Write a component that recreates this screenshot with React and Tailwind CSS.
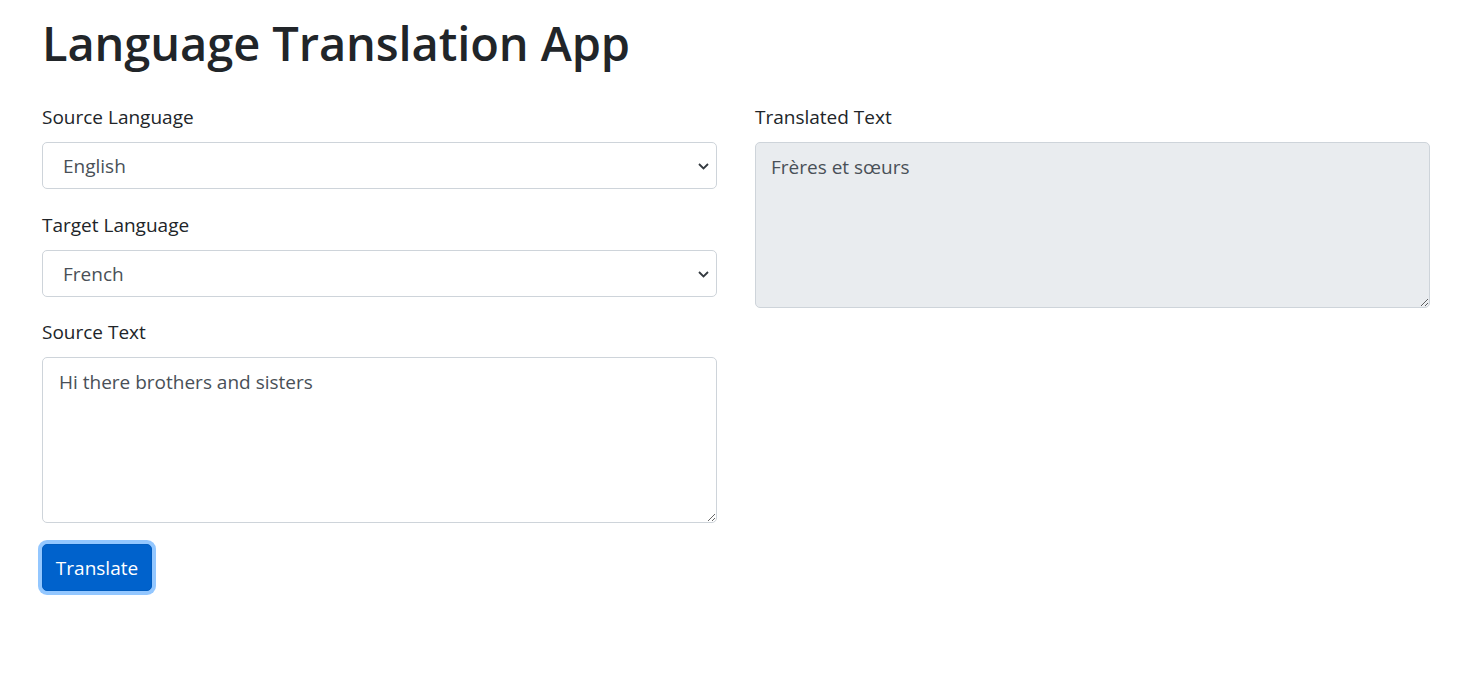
import React, { useState } from 'react';

const Chevron = () => (
  <svg width="11" height="7" viewBox="0 0 11 7" fill="none" className="shrink-0">
    <path d="M1 1l4.5 4.5L10 1" stroke="#343a40" strokeWidth="1.8" />
  </svg>
);

const FakeSelect = ({ value }) => (
  <div className="flex h-[47px] w-full items-center justify-between rounded-[5px] border border-[#ced4da] bg-white pl-[20px] pr-[7px] pt-[2px] text-[19px] text-[#495057]">
    <span>{value}</span>
    <Chevron />
  </div>
);

const App = () => {
  const [source, setSource] = useState('Hi there brothers and sisters');

  return (
    <div className="min-h-screen bg-white px-[42px] text-[#212529]" style={{ fontFamily: '"Open Sans", "Noto Sans", sans-serif' }}>
      {/** Heading **/}
      <h1 className="mt-[13px] mb-[29px] text-[47px] font-semibold leading-[60px] tracking-[-0.1px]">Language Translation App</h1>

      <div className="grid w-[1388px] grid-cols-2 gap-x-[38px]">
        {/** Left column **/}
        <div>
          <div className="mb-[21px]">
            <label className="mb-[10px] block text-[19px] leading-[30px]">Source Language</label>
            <FakeSelect value="English" />
          </div>
          <div className="mb-[20px]">
            <label className="mb-[10px] block text-[19px] leading-[30px]">Target Language</label>
            <FakeSelect value="French" />
          </div>
          <div className="mb-[21px]">
            <label className="mb-[10px] block text-[19px] leading-[30px]">Source Text</label>
            <textarea
              value={source}
              onChange={(e) => setSource(e.target.value)}
              className="block h-[166px] w-full rounded-[5px] border border-[#ced4da] bg-white px-[16px] pt-[9px] pb-[5px] text-[19px] leading-[30px] text-[#495057] outline-none"
            />
          </div>
          <button className="h-[47px] w-[110px] rounded-[5px] border border-[#005cbf] bg-[#0062cc] pt-[1px] text-center text-[19px] leading-[30px] text-white shadow-[0_0_0_4px_#93c7ff]">
            Translate
          </button>
        </div>

        {/** Right column **/}
        <div>
          <label className="mb-[10px] block text-[19px] leading-[30px]">Translated Text</label>
          <textarea
            readOnly
            value="Frères et sœurs"
            className="block h-[166px] w-full rounded-[5px] border border-[#ced4da] bg-[#e9ecef] px-[15px] pt-[9px] pb-[5px] text-[19px] leading-[30px] text-[#495057] outline-none"
          />
        </div>
      </div>
    </div>
  );
};

export default App;
